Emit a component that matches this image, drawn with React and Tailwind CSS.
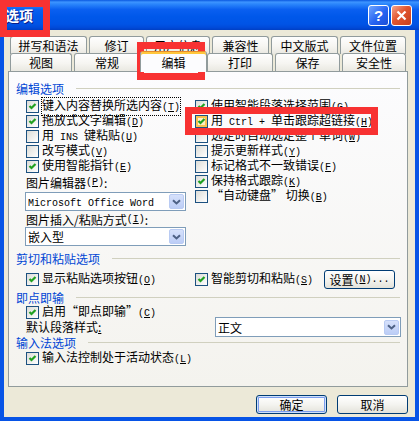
import React from "react";

const Acc = ({ k, tail = "" }) => (
  <span className="font-['Liberation_Mono',monospace] text-[10px] whitespace-pre">
    (<span className="underline underline-offset-[1px]">{k}</span>){tail}
  </span>
);

const M = ({ children }) => (
  <span className="font-['Liberation_Mono',monospace] text-[10px] whitespace-pre">{children}</span>
);

function Cb({ on, hot }) {
  return (
    <span
      className={`relative inline-block w-[13px] h-[13px] shrink-0 border border-[#1c5180] ${
        hot
          ? "bg-[linear-gradient(135deg,#fff6dc,#fde9b4)] shadow-[inset_0_0_0_2px_#f9c24f]"
          : "bg-[linear-gradient(135deg,#dcdcd7,#ffffff)]"
      }`}
    >
      {on && (
        <svg className="absolute left-0 top-0" width="11" height="11" viewBox="0 0 11 11">
          <path d="M2.5 5 L4.5 7 L8.5 3" fill="none" stroke="#21a121" strokeWidth="2.2" />
        </svg>
      )}
    </span>
  );
}

function Row({ on, hot, h, focus, children }) {
  return (
    <div className={`flex items-center gap-[3px] ${h || "h-[15px]"}`}>
      <Cb on={on} hot={hot} />
      <span
        className={`whitespace-nowrap leading-[14px] ${
          focus ? "outline outline-1 outline-dotted outline-black" : ""
        }`}
      >
        {children}
      </span>
    </div>
  );
}

function Header({ children, cls }) {
  return (
    <div className={`flex items-center pl-[7px] pr-[7px] ${cls}`}>
      <span className="text-[#0046d5] whitespace-nowrap leading-[15px]">{children}</span>
      <span className="flex-1 h-px bg-[#d0d0bf] ml-[12px]" />
    </div>
  );
}

function Combo({ children, cls }) {
  return (
    <div className={`flex items-center border border-[#7f9db9] bg-white pl-[2px] pr-[1px] ${cls}`}>
      <span className="flex-1 whitespace-nowrap overflow-hidden leading-[15px]">{children}</span>
      <span className="w-[15px] h-[15px] rounded-[2px] border border-[#b9cbf3] bg-[linear-gradient(#d6e1fb,#bccdf6)] flex items-center justify-center">
        <svg width="9" height="6" viewBox="0 0 9 6">
          <path d="M1 1.2 L4.5 4.5 L8 1.2" fill="none" stroke="#4d6185" strokeWidth="2" />
        </svg>
      </span>
    </div>
  );
}

function Tab({ children, cls }) {
  return (
    <div
      className={`h-[18px] rounded-t-[3px] border border-b-0 border-[#919b9c] bg-[linear-gradient(#fefefe,#f6f5f1_55%,#e9e8e1)] flex items-center justify-center whitespace-nowrap leading-[14px] ${cls}`}
    >
      {children}
    </div>
  );
}

function Btn({ children, def, cls }) {
  return (
    <div
      className={`h-[19px] rounded-[3px] border border-[#003c74] flex items-center justify-center whitespace-nowrap leading-[14px] bg-[linear-gradient(#ffffff,#f4f4f0_50%,#e3e2da)] ${
        def ? "shadow-[inset_0_0_0_1px_#cee0fb,inset_0_0_0_2px_#7c9ded]" : ""
      } ${cls}`}
    >
      {children}
    </div>
  );
}

export default function App() {
  return (
    <div
      lang="zh-CN"
      className="relative w-[419px] h-[421px] overflow-hidden flex flex-col bg-[#0754e6] text-black text-[12px] font-['Noto_Sans_CJK_SC',sans-serif]"
    >
      {/* title bar */}
      <div className="h-[30px] shrink-0 flex items-center pl-[5px] pr-[7px] bg-[linear-gradient(180deg,#0a58e0_0%,#3d94ff_7%,#2a85fb_14%,#0a5ff0_32%,#0058ea_55%,#0054e6_80%,#004ad9_92%,#003fc4_100%)]">
        <span className="text-white font-bold text-[14px] leading-[16px] [text-shadow:1px_1px_0_#0a1e8a]">选项</span>
        <div className="ml-auto flex gap-[2px]">
          <div className="w-[21px] h-[21px] rounded-[3px] border border-white bg-[linear-gradient(135deg,#6fa6ff,#2663f2_55%,#1c4fd6)] flex items-center justify-center text-white font-bold text-[15px] leading-[15px] font-['Liberation_Sans',sans-serif]">
            ?
          </div>
          <div className="w-[21px] h-[21px] rounded-[3px] border border-white bg-[linear-gradient(135deg,#f4a48c,#e1552f_45%,#c43f1e)] flex items-center justify-center">
            <svg width="11" height="11" viewBox="0 0 11 11">
              <path d="M1.5 1.5 L9.5 9.5 M9.5 1.5 L1.5 9.5" stroke="#fff" strokeWidth="2.2" />
            </svg>
          </div>
        </div>
      </div>

      {/* body */}
      <div className="flex-1 mx-[4px] mb-[4px] bg-[#ece9d8] flex flex-col">
        {/* tab row 1 */}
        <div className="mt-[6px] pl-[6px] h-[18px] flex gap-[2px]">
          <Tab cls="w-[77px]">拼写和语法</Tab>
          <Tab cls="w-[55px]">修订</Tab>
          <Tab cls="w-[64px]">用户信息</Tab>
          <Tab cls="w-[57px]">兼容性</Tab>
          <Tab cls="w-[67px]">中文版式</Tab>
          <Tab cls="w-[66px]">文件位置</Tab>
        </div>
        {/* tab row 2 */}
        <div className="pl-[6px] h-[17px] flex items-end">
          <Tab cls="w-[62px] h-[17px]">视图</Tab>
          <Tab cls="w-[66px] h-[17px] ml-[2px]">常规</Tab>
          <div className="relative z-10 w-[67px] h-[21px] -mb-[1px] rounded-t-[3px] border border-b-0 border-[#919b9c] border-t-[#e68b2c] bg-[#fcfcfe] shadow-[inset_0_2px_0_#ffc73c] flex items-center justify-center pt-[1px] leading-[14px]">
            编辑
          </div>
          <Tab cls="w-[66px] h-[17px]">打印</Tab>
          <Tab cls="w-[65px] h-[17px] ml-[2px]">保存</Tab>
          <Tab cls="w-[64px] h-[17px] ml-[2px]">安全性</Tab>
        </div>

        {/* panel */}
        <div className="ml-[4px] w-[400px] h-[316px] shrink-0 border border-[#919b9c] bg-[linear-gradient(#fcfcfe,#f4f3ee)] flex flex-col">
          <Header cls="mt-[9px] h-[15px]">编辑选项</Header>
          <div className="mt-[2px] flex">
            <div className="w-[186px] pl-[17px] flex flex-col">
              <Row on h="h-[16px]" focus>
                键入内容替换所选内容<Acc k="T" />
              </Row>
              <Row on>
                拖放式文字编辑<Acc k="D" />
              </Row>
              <Row>
                用<M> INS </M>键粘贴<Acc k="U" />
              </Row>
              <Row>
                改写模式<Acc k="V" />
              </Row>
              <Row on>
                使用智能指针<Acc k="E" />
              </Row>
              <div className="mt-[1px] h-[15px] flex items-center whitespace-nowrap leading-[14px]">
                图片编辑器<Acc k="P" />:
              </div>
              <Combo cls="mt-[2px] -ml-[1px] w-[161px] h-[19px]">
                <span className="font-['Liberation_Mono',monospace] text-[10px]">Microsoft Office Word</span>
              </Combo>
              <div className="mt-[1px] h-[15px] flex items-center whitespace-nowrap leading-[14px]">
                图片插入/粘贴方式<Acc k="I" />:
              </div>
              <Combo cls="-ml-[1px] w-[161px] h-[19px]">嵌入型</Combo>
            </div>
            <div className="flex flex-col">
              <Row on h="h-[16px]">
                使用智能段落选择范围<Acc k="G" />
              </Row>
              <Row on hot>
                用<M> Ctrl + </M>单击跟踪超链接<Acc k="H" />
              </Row>
              <Row>
                选定时自动选定整个单词<Acc k="W" />
              </Row>
              <Row>
                提示更新样式<Acc k="Y" />
              </Row>
              <Row>
                标记格式不一致错误<Acc k="F" />
              </Row>
              <Row on>
                保持格式跟踪<Acc k="K" />
              </Row>
              <Row>
                “自动键盘” 切换<Acc k="B" />
              </Row>
            </div>
          </div>

          <Header cls="mt-[5px] h-[15px]">剪切和粘贴选项</Header>
          <div className="mt-[4px] h-[19px] flex items-center">
            <div className="w-[186px] pl-[17px]">
              <Row on>
                显示粘贴选项按钮<Acc k="O" />
              </Row>
            </div>
            <div className="flex-1 flex items-center pr-[12px]">
              <Row on>
                智能剪切和粘贴<Acc k="S" />
              </Row>
              <Btn cls="ml-auto w-[71px]">
                设置<Acc k="N" tail="..." />
              </Btn>
            </div>
          </div>

          <Header cls="mt-[1px] h-[15px]">即点即输</Header>
          <div className="pl-[17px]">
            <Row on h="h-[14px]">
              启用“即点即输”<Acc k="C" />
            </Row>
          </div>
          <div className="-mt-[2px] h-[20px] flex items-center pl-[17px] pr-[6px]">
            <span className="whitespace-nowrap leading-[14px]">
              默认段落样式<span className="underline">:</span>
            </span>
            <Combo cls="ml-auto w-[186px] h-[20px]">正文</Combo>
          </div>

          <Header cls="h-[10px]">输入法选项</Header>
          <div className="mt-[4px] pl-[17px]">
            <Row on>
              输入法控制处于活动状态<Acc k="L" />
            </Row>
          </div>
        </div>

        {/* buttons */}
        <div className="mt-[8px] h-[19px] flex justify-end gap-[10px] pr-[7px]">
          <Btn def cls="w-[71px]">确定</Btn>
          <Btn cls="w-[71px]">取消</Btn>
        </div>
      </div>

      {/* red annotation boxes */}
      <div className="absolute left-0 top-0 w-[50px] h-[37px] border-[7px] border-[#f83232]" />
      <div className="absolute left-[137px] top-[42px] w-[68px] h-[38px] border-[7px] border-[#f83232]" />
      <div className="absolute left-[185px] top-[107px] w-[193px] h-[28px] border-[7px] border-[#f83232]" />
    </div>
  );
}
